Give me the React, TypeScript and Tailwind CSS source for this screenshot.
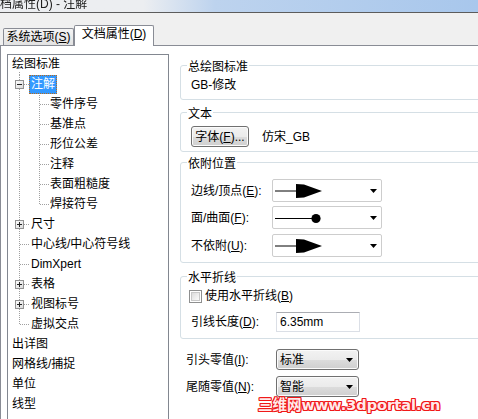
import React from "react";

type Row = {
  t: string;
  l: 0 | 1 | 2;
  box?: "plus" | "minus";
  v1?: "full" | "top" | "tail";
  v2?: "full" | "top";
  sel?: boolean;
};

const rows: Row[] = [
  { t: "绘图标准", l: 0, v1: "tail" },
  { t: "注解", l: 1, box: "minus", v1: "full", sel: true },
  { t: "零件序号", l: 2, v1: "full", v2: "full" },
  { t: "基准点", l: 2, v1: "full", v2: "full" },
  { t: "形位公差", l: 2, v1: "full", v2: "full" },
  { t: "注释", l: 2, v1: "full", v2: "full" },
  { t: "表面粗糙度", l: 2, v1: "full", v2: "full" },
  { t: "焊接符号", l: 2, v1: "full", v2: "top" },
  { t: "尺寸", l: 1, box: "plus", v1: "full" },
  { t: "中心线/中心符号线", l: 1, v1: "full" },
  { t: "DimXpert", l: 1, v1: "full" },
  { t: "表格", l: 1, box: "plus", v1: "full" },
  { t: "视图标号", l: 1, box: "plus", v1: "full" },
  { t: "虚拟交点", l: 1, v1: "top" },
  { t: "出详图", l: 0 },
  { t: "网格线/捕捉", l: 0 },
  { t: "单位", l: 0 },
  { t: "线型", l: 0 },
];

// dotted connector lines of the tree
function TreeLines({ r }: { r: Row }) {
  const dot = {
    stroke: "#a0a0a0",
    strokeDasharray: "1 1",
    shapeRendering: "crispEdges" as const,
  };
  const v1y = r.v1 === "full" ? [0, 20] : r.v1 === "top" ? [0, 10] : [17, 20];
  return (
    <svg className="pointer-events-none absolute left-0 top-0" width="50" height="20">
      {r.v1 && <line x1="11.5" x2="11.5" y1={v1y[0]} y2={v1y[1]} {...dot} />}
      {r.v2 && <line x1="31.5" x2="31.5" y1="0" y2={r.v2 === "full" ? 20 : 10} {...dot} />}
      {r.l === 1 && <line x1={r.box ? 16 : 12} x2="22" y1="9.5" y2="9.5" {...dot} />}
      {r.l === 2 && <line x1="32" x2="41" y1="9.5" y2="9.5" {...dot} />}
      {r.box && (
        <g shapeRendering="crispEdges">
          <defs>
            <linearGradient id="bx" x1="0" y1="0" x2="1" y2="1">
              <stop offset="0" stopColor="#ffffff" />
              <stop offset="1" stopColor="#d8d8d8" />
            </linearGradient>
          </defs>
          <rect x="7.5" y="5.5" width="8" height="8" fill="url(#bx)" stroke="#919191" />
          <line x1="9" x2="14" y1="9.5" y2="9.5" stroke="#222" />
          {r.box === "plus" && <line x1="11.5" x2="11.5" y1="7" y2="12" stroke="#222" />}
        </g>
      )}
    </svg>
  );
}

function TreeRow({ r }: { r: Row }) {
  const pad = r.l === 0 ? "pl-[4px]" : r.l === 1 ? (r.sel ? "pl-[21px]" : "pl-[23px]") : "pl-[42px]";
  return (
    <div className={`relative flex h-5 items-start whitespace-nowrap ${pad}`}>
      <TreeLines r={r} />
      {r.sel ? (
        <span className="h-[19px] border border-dotted border-[#b86a1c] bg-[#3399ff] px-px leading-[17px] text-white">
          {r.t}
        </span>
      ) : (
        <span className="leading-[18px]">{r.t}</span>
      )}
    </div>
  );
}

function Acc({ label, k, tail = "" }: { label: string; k: string; tail?: string }) {
  return (
    <span className="whitespace-nowrap">
      {label}(<span className="underline">{k}</span>){tail}
    </span>
  );
}

function Group({ title, className, children }: { title: string; className: string; children: React.ReactNode }) {
  return (
    <div className={`relative w-[320px] rounded-[3px] border border-[#d5dfe5] ${className}`}>
      <span className="absolute left-[6px] top-[-7px] bg-white px-px leading-4">{title}</span>
      {children}
    </div>
  );
}

function Caret() {
  return (
    <svg width="7" height="4" className="shrink-0">
      <path d="M0 0h7L3.5 4z" fill="#000" />
    </svg>
  );
}

function ArrowCombo({ kind }: { kind: "arrow" | "dot" }) {
  return (
    <div className="flex h-[23px] w-[110px] items-center rounded-[2px] border border-[#cdcdcd] bg-white pl-[2px] pr-[4px]">
      <svg width="60" height="16" className="shrink-0">
        {kind === "arrow" ? (
          <>
            <line x1="0" x2="22" y1="8" y2="8" stroke="#000" />
            <polygon points="21,1 29,1.5 47,8 29,14.5 21,15" fill="#000" />
          </>
        ) : (
          <>
            <line x1="0" x2="40" y1="8.5" y2="8.5" stroke="#000" />
            <circle cx="41" cy="8.5" r="4.6" fill="#000" />
          </>
        )}
      </svg>
      <span className="ml-auto">
        <Caret />
      </span>
    </div>
  );
}

const btn =
  "rounded-[3px] border border-[#707070] bg-[linear-gradient(#f2f2f2,#ebebeb_50%,#dddddd_50%,#cfcfcf)] shadow-[inset_0_0_0_1px_#fbfbfb]";

export default function App() {
  return (
    <div className="relative h-[419px] w-[478px] overflow-hidden bg-[#f0f0f0] font-['Liberation_Sans','Noto_Sans_CJK_SC',sans-serif] text-[12px] text-black">
      {/* title bar, mostly cut off */}
      <div className="h-[12px] overflow-hidden bg-linear-to-r from-[#eceef1] from-[30%] via-[#bdd3ee] via-[45%] to-[#a8c7ec]">
        <div className="ml-[-12px] mt-[-4px] whitespace-nowrap leading-4 text-[#202020] blur-[0.3px]">
          文档属性(D) - 注解
        </div>
      </div>
      <div className="h-px bg-[#5c5c5c]" />

      {/* tabs */}
      <div className="flex h-[32px] items-end pl-[3px]">
        <div className="flex h-[17px] w-[71px] items-start justify-center rounded-t-[2px] border border-b-0 border-[#898c95] bg-linear-to-b from-[#f4f4f4] to-[#e2e2e2] leading-4">
          <Acc label="系统选项" k="S" />
        </div>
        <div className="relative z-10 -mb-px flex h-[21px] w-[80px] items-start justify-center rounded-t-[2px] border border-b-0 border-[#898c95] bg-white leading-4">
          <Acc label="文档属性" k="D" />
        </div>
      </div>

      {/* tab page */}
      <div className="flex h-[374px] border-l border-t border-[#898c95] bg-white">
        <div className="ml-[6px] mt-[8px] h-[400px] w-[162px] shrink-0 border border-[#828790] bg-white">
          {rows.map((r) => (
            <TreeRow key={r.t} r={r} />
          ))}
        </div>

        <div className="ml-[11px] flex flex-col">
          <Group title="总绘图标准" className="mt-[19px] pb-[6px] pl-[10px] pt-[11px]">
            <div className="leading-4">GB-修改</div>
          </Group>

          <Group title="文本" className="mt-[12px] pb-[4px] pl-[10px] pt-[13px]">
            <div className="flex items-center">
              <div className={`flex h-[21px] w-[58px] items-center justify-center ${btn}`}>
                <Acc label="字体" k="F" tail="..." />
              </div>
              <span className="ml-[13px]">仿宋_GB</span>
            </div>
          </Group>

          <Group title="依附位置" className="mt-[10px] pb-[5px] pl-[10px] pt-[16px]">
            <div className="grid grid-cols-[81px_110px]">
              <div className="flex h-[23px] items-center">
                <Acc label="边线/顶点" k="E" tail=":" />
              </div>
              <ArrowCombo kind="arrow" />
              <div className="mt-[4px] flex h-[23px] items-center">
                <Acc label="面/曲面" k="F" tail=":" />
              </div>
              <div className="mt-[4px]">
                <ArrowCombo kind="dot" />
              </div>
              <div className="mt-[5px] flex h-[23px] items-center">
                <Acc label="不依附" k="U" tail=":" />
              </div>
              <div className="mt-[5px]">
                <ArrowCombo kind="arrow" />
              </div>
            </div>
          </Group>

          <Group title="水平折线" className="mt-[13px] pb-[6px] pl-[10px] pt-[11px]">
            <div className="-ml-[2px] flex h-4 items-center">
              <div className="flex h-[13px] w-[13px] items-center justify-center border border-[#8e8f8f] bg-white">
                <div className="h-[9px] w-[9px] border border-[#c8c8c8] bg-linear-to-br from-[#dcdcdc] to-[#fbfbfb]" />
              </div>
              <span className="ml-[3px]">
                <Acc label="使用水平折线" k="B" />
              </span>
            </div>
            <div className="mt-[8px] flex h-[20px] items-center">
              <span className="w-[85px]">
                <Acc label="引线长度" k="D" tail=":" />
              </span>
              <div className="flex h-[20px] w-[84px] items-center border border-[#dbdfe6] border-t-[#abadb3] pl-[3px]">
                6.35mm
              </div>
            </div>
          </Group>

          <div className="pl-[6px]">
            <div className="mt-[10px] flex h-[21px] items-center">
              <span className="w-[90px]">
                <Acc label="引头零值" k="I" tail=":" />
              </span>
              <div className={`flex h-[21px] w-[83px] items-center pl-[3px] pr-[5px] ${btn}`}>
                <span>标准</span>
                <span className="ml-auto">
                  <Caret />
                </span>
              </div>
            </div>
            <div className="mt-[6px] flex h-[21px] items-center">
              <span className="w-[90px]">
                <Acc label="尾随零值" k="N" tail=":" />
              </span>
              <div className={`flex h-[21px] w-[83px] items-center pl-[3px] pr-[5px] ${btn}`}>
                <span>智能</span>
                <span className="ml-auto">
                  <Caret />
                </span>
              </div>
            </div>
          </div>
        </div>
      </div>

      {/* site watermark */}
      <div className="absolute left-[258px] top-[397px] whitespace-nowrap font-['DejaVu_Sans','Noto_Sans_CJK_SC',sans-serif] text-[14.5px] font-bold leading-4 text-[#ffeaea] [text-shadow:1px_0_#f01818,-1px_0_#f01818,0_1px_#f01818,0_-1px_#f01818,1px_1px_#f01818,-1px_-1px_#f01818,1px_-1px_#f01818,-1px_1px_#f01818]">
        三维网www.3dportal.cn
      </div>
    </div>
  );
}
